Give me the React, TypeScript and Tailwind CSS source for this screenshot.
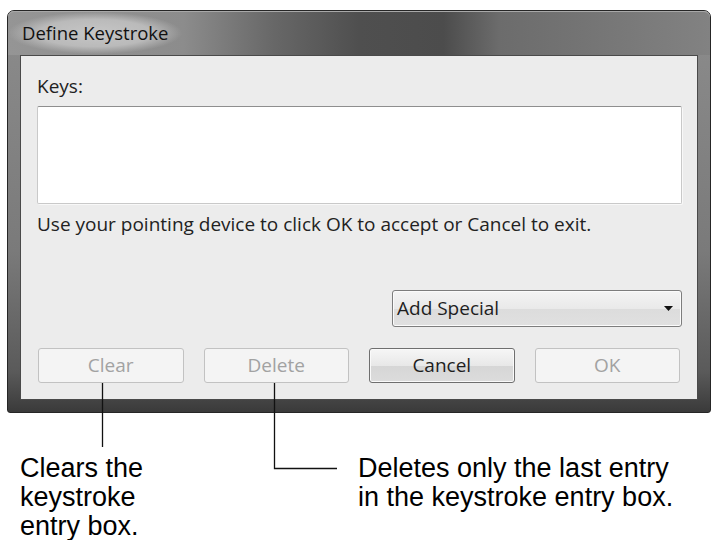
import React from "react";

function DialogButton({ label, disabled }: { label: string; disabled?: boolean }) {
  return disabled ? (
    <div className="h-[35px] flex items-center justify-center rounded-[3px] border border-[#c2c2c2] bg-[#f4f4f4] text-[#a2a2a2] text-[19px]">
      {label}
    </div>
  ) : (
    <div className="h-[35px] flex items-center justify-center rounded-[3px] border border-[#6f6f6f] bg-[linear-gradient(180deg,#f6f6f6_0%,#e8e8e8_50%,#d6d6d6_52%,#dcdcdc_100%)] text-[#1e1e1e] text-[19px] shadow-[inset_0_0_0_1px_#fafafa]">
      {label}
    </div>
  );
}

export default function App() {
  return (
    <div className="w-[712px] h-[540px] bg-white relative overflow-hidden">
      {/* dialog window */}
      <div className="ml-[7px] mt-[10px] w-[704px] h-[403px] rounded-t-[7px] rounded-b-[3px] border border-[#262626] bg-[linear-gradient(180deg,#8c8c8c_0%,#7a7a7a_60%,#5a5a5a_90%,#3a3a3a_100%)] flex flex-col font-['Open_Sans',sans-serif] font-medium">
        <div className="h-[44px] shrink-0 flex items-center pl-[8px] rounded-t-[6px] bg-[linear-gradient(90deg,#959595_0%,#8c8c8c_25%,#676767_38%,#4f4f4f_50%,#4c4c4c_62%,#6c6c6c_70%,#747474_82%,#828282_100%)] shadow-[inset_0_1px_0_#a8a8a8]">
          <span className="-ml-[8px] px-[14px] py-[10px] bg-[radial-gradient(ellipse_closest-side,#c6c6c6_0%,#bababa_65%,rgba(160,160,160,0)_100%)] text-[18.5px] text-[#111] leading-[22px]">
            Define Keystroke
          </span>
        </div>
        <div className="flex-1 px-[12px] pb-[12px] flex">
          <div className="flex-1 border border-[#4a4a4a] bg-[#ececec] flex flex-col text-[#222]">
            <div className="pl-[16px] pt-[18px] text-[19px] leading-[24px]">Keys:</div>
            <div className="ml-[16px] mt-[8px] w-[645px] h-[98px] rounded-[2px] border border-[#c9c9c9] border-t-[#8e8e8e] bg-white shadow-[1px_1px_0_#f8f8f8]" />
            <div className="pl-[16px] mt-[8px] text-[19px] leading-[24px]">
              Use your pointing device to click OK to accept or Cancel to exit.
            </div>
            <div className="ml-[371px] mt-[54px] w-[290px] h-[37px] rounded-[3px] border border-[#7d7d7d] bg-[linear-gradient(180deg,#f4f4f4_0%,#e9e9e9_50%,#dcdcdc_52%,#e0e0e0_100%)] flex items-center pl-[4px] pr-[8px] shadow-[inset_0_0_0_1px_#fbfbfb]">
              <span className="flex-1 text-[19px] text-[#1e1e1e]">Add Special</span>
              <svg width="9" height="5" viewBox="0 0 9 5">
                <path d="M0 0h9L4.5 5z" fill="#111" />
              </svg>
            </div>
            <div className="ml-[17px] mt-[21px] w-[642px] grid grid-cols-4 gap-x-[20px]">
              <DialogButton label="Clear" disabled />
              <DialogButton label="Delete" disabled />
              <DialogButton label="Cancel" />
              <DialogButton label="OK" disabled />
            </div>
          </div>
        </div>
      </div>

      {/* callout captions */}
      <div className="relative font-['Liberation_Sans',Arial,sans-serif] text-[27px] leading-[29px] text-black">
        <div className="absolute left-[20px] top-[41px]">
          Clears the
          <br />
          keystroke
          <br />
          entry box.
        </div>
        <div className="absolute left-[358px] top-[41px]">
          Deletes only the last entry
          <br />
          in the keystroke entry box.
        </div>
      </div>

      {/* leader lines */}
      <svg className="absolute left-0 top-0 pointer-events-none" width="712" height="540">
        <path d="M102.5 383V447" stroke="#111" strokeWidth="1.3" fill="none" />
        <path d="M274.5 383V468.5H337" stroke="#111" strokeWidth="1.3" fill="none" />
      </svg>
    </div>
  );
}
